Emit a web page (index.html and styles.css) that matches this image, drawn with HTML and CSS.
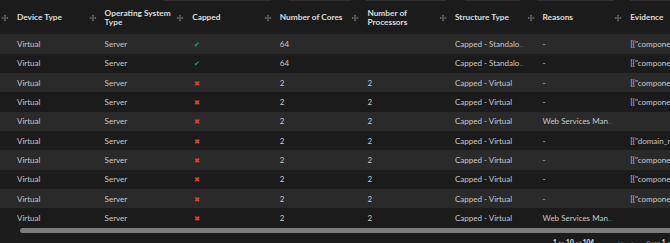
FILE: index.html
```html
<!DOCTYPE html>
<html>
  <head>
    <title>Capping Report</title>
    <meta name="viewport" content="width=device-width, initial-scale=1.0" />
    <link rel="stylesheet" href="styles.css">
  </head>
  <body>
    <div class="grid">
      <div class="filters">
        <span class="f f1"></span>
        <span class="f f2"></span>
        <span class="f f3"></span>
        <span class="f f4"></span>
        <span class="f f5"></span>
        <span class="f f6"></span>
      </div>

      <div class="viewport">
        <div class="row head">
          <div class="cell"><svg class="grip" viewBox="0 0 8 8"><path d="M4 0.5L5.3 2H4.5V3.5H6V2.7L7.5 4L6 5.3V4.5H4.5V6H5.3L4 7.5L2.7 6H3.5V4.5H2V5.3L0.5 4L2 2.7V3.5H3.5V2H2.7Z"/></svg><span>Device Type</span></div>
          <div class="cell"><svg class="grip" viewBox="0 0 8 8"><path d="M4 0.5L5.3 2H4.5V3.5H6V2.7L7.5 4L6 5.3V4.5H4.5V6H5.3L4 7.5L2.7 6H3.5V4.5H2V5.3L0.5 4L2 2.7V3.5H3.5V2H2.7Z"/></svg><span>Operating System<br>Type</span></div>
          <div class="cell"><svg class="grip" viewBox="0 0 8 8"><path d="M4 0.5L5.3 2H4.5V3.5H6V2.7L7.5 4L6 5.3V4.5H4.5V6H5.3L4 7.5L2.7 6H3.5V4.5H2V5.3L0.5 4L2 2.7V3.5H3.5V2H2.7Z"/></svg><span>Capped</span></div>
          <div class="cell"><svg class="grip" viewBox="0 0 8 8"><path d="M4 0.5L5.3 2H4.5V3.5H6V2.7L7.5 4L6 5.3V4.5H4.5V6H5.3L4 7.5L2.7 6H3.5V4.5H2V5.3L0.5 4L2 2.7V3.5H3.5V2H2.7Z"/></svg><span>Number of Cores</span></div>
          <div class="cell"><svg class="grip" viewBox="0 0 8 8"><path d="M4 0.5L5.3 2H4.5V3.5H6V2.7L7.5 4L6 5.3V4.5H4.5V6H5.3L4 7.5L2.7 6H3.5V4.5H2V5.3L0.5 4L2 2.7V3.5H3.5V2H2.7Z"/></svg><span>Number of<br>Processors</span></div>
          <div class="cell"><svg class="grip" viewBox="0 0 8 8"><path d="M4 0.5L5.3 2H4.5V3.5H6V2.7L7.5 4L6 5.3V4.5H4.5V6H5.3L4 7.5L2.7 6H3.5V4.5H2V5.3L0.5 4L2 2.7V3.5H3.5V2H2.7Z"/></svg><span>Structure Type</span></div>
          <div class="cell"><svg class="grip" viewBox="0 0 8 8"><path d="M4 0.5L5.3 2H4.5V3.5H6V2.7L7.5 4L6 5.3V4.5H4.5V6H5.3L4 7.5L2.7 6H3.5V4.5H2V5.3L0.5 4L2 2.7V3.5H3.5V2H2.7Z"/></svg><span>Reasons</span></div>
          <div class="cell"><svg class="grip" viewBox="0 0 8 8"><path d="M4 0.5L5.3 2H4.5V3.5H6V2.7L7.5 4L6 5.3V4.5H4.5V6H5.3L4 7.5L2.7 6H3.5V4.5H2V5.3L0.5 4L2 2.7V3.5H3.5V2H2.7Z"/></svg><span>Evidence</span></div>
          <div class="cell"><span>Last Seen</span></div>
        </div>

        <div class="row odd">
          <div class="cell">Virtual</div><div class="cell">Server</div>
          <div class="cell"><span class="yes">&#10004;</span></div>
          <div class="cell">64</div><div class="cell"></div>
          <div class="cell">Capped - Standalo<span class="more">...</span></div>
          <div class="cell">-</div><div class="cell">[{"component"</div><div class="cell"></div>
        </div>
        <div class="row">
          <div class="cell">Virtual</div><div class="cell">Server</div>
          <div class="cell"><span class="yes">&#10004;</span></div>
          <div class="cell">64</div><div class="cell"></div>
          <div class="cell">Capped - Standalo<span class="more">...</span></div>
          <div class="cell">-</div><div class="cell">[{"component"</div><div class="cell"></div>
        </div>
        <div class="row odd">
          <div class="cell">Virtual</div><div class="cell">Server</div>
          <div class="cell"><span class="no">&#10006;</span></div>
          <div class="cell">2</div><div class="cell">2</div>
          <div class="cell">Capped - Virtual</div>
          <div class="cell">-</div><div class="cell">[{"component"</div><div class="cell"></div>
        </div>
        <div class="row">
          <div class="cell">Virtual</div><div class="cell">Server</div>
          <div class="cell"><span class="no">&#10006;</span></div>
          <div class="cell">2</div><div class="cell">2</div>
          <div class="cell">Capped - Virtual</div>
          <div class="cell">-</div><div class="cell">[{"component"</div><div class="cell"></div>
        </div>
        <div class="row odd">
          <div class="cell">Virtual</div><div class="cell">Server</div>
          <div class="cell"><span class="no">&#10006;</span></div>
          <div class="cell">2</div><div class="cell">2</div>
          <div class="cell">Capped - Virtual</div>
          <div class="cell">Web Services Man<span class="more">...</span></div><div class="cell"></div><div class="cell"></div>
        </div>
        <div class="row">
          <div class="cell">Virtual</div><div class="cell">Server</div>
          <div class="cell"><span class="no">&#10006;</span></div>
          <div class="cell">2</div><div class="cell">2</div>
          <div class="cell">Capped - Virtual</div>
          <div class="cell">-</div><div class="cell">[{"domain_name"</div><div class="cell"></div>
        </div>
        <div class="row odd">
          <div class="cell">Virtual</div><div class="cell">Server</div>
          <div class="cell"><span class="no">&#10006;</span></div>
          <div class="cell">2</div><div class="cell">2</div>
          <div class="cell">Capped - Virtual</div>
          <div class="cell">-</div><div class="cell">[{"component"</div><div class="cell"></div>
        </div>
        <div class="row">
          <div class="cell">Virtual</div><div class="cell">Server</div>
          <div class="cell"><span class="no">&#10006;</span></div>
          <div class="cell">2</div><div class="cell">2</div>
          <div class="cell">Capped - Virtual</div>
          <div class="cell">-</div><div class="cell">[{"component"</div><div class="cell"></div>
        </div>
        <div class="row odd">
          <div class="cell">Virtual</div><div class="cell">Server</div>
          <div class="cell"><span class="no">&#10006;</span></div>
          <div class="cell">2</div><div class="cell">2</div>
          <div class="cell">Capped - Virtual</div>
          <div class="cell">-</div><div class="cell">[{"component"</div><div class="cell"></div>
        </div>
        <div class="row">
          <div class="cell">Virtual</div><div class="cell">Server</div>
          <div class="cell"><span class="no">&#10006;</span></div>
          <div class="cell">2</div><div class="cell">2</div>
          <div class="cell">Capped - Virtual</div>
          <div class="cell">Web Services Man<span class="more">...</span></div><div class="cell"></div><div class="cell"></div>
        </div>
      </div>

      <!-- horizontal scrollbar -->
      <div class="scrollbar"><div class="thumb"></div></div>

      <div class="pager">
        <span class="count"><b>1</b> to <b>10</b> of <b>104</b></span>
        <span class="nav">|&lt;</span>
        <span class="nav">&lt;</span>
        <span class="page">Page <b>1</b> of <b>11</b></span>
      </div>
    </div>
  </body>
</html>
```

FILE: styles.css
```css
body {
  margin: 0;
  background-color: #1b1b1b;
  font-family: "Lato", "Liberation Sans", sans-serif;
  color: #c9c9c9;
  overflow: hidden;
}

.grid {
  width: 670px;
  height: 243px;
  overflow: hidden;
}

.filters {
  display: flex;
  height: 1px;
}

.f {
  height: 1px;
  background-color: #303030;
}

.f1 { margin-left: 164px; width: 108px; }
.f2 { margin-left: 18px; width: 62px; }
.f3 { margin-left: 15px; width: 80px; }
.f4 { margin-left: 19px; width: 55px; }
.f5 { margin-left: 17px; width: 78px; }
.f6 { margin-left: 16px; width: 40px; }

.viewport {
  width: 670px;
  overflow: hidden;
}

.row {
  display: grid;
  grid-template-columns: repeat(9, 87.6px);
  height: 19.35px;
  align-items: center;
  font-size: 8px;
  background-color: #1b1b1b;
}

.row.odd {
  background-color: #2a2a2a;
}

.row .cell {
  padding-left: 17px;
  white-space: nowrap;
  overflow: hidden;
}

.row.head {
  height: 33.3px;
  font-size: 8.3px;
  font-weight: 700;
  color: #dedede;
}

.row.head .cell {
  display: flex;
  align-items: center;
  padding-left: 1px;
  line-height: 9.5px;
}

.grip {
  width: 8px;
  height: 8px;
  fill: #6e6e6e;
  margin-right: 8px;
  flex-shrink: 0;
}

.row.head .cell span {
  padding-top: 1px;
}

.yes,
.no {
  display: inline-block;
  margin-left: 2px;
  font-size: 7px;
}

.yes {
  color: #17a58c;
}

.no {
  color: #e0453a;
}

.more {
  color: #1f9d8a;
  font-size: 6px;
}

.scrollbar {
  height: 5px;
  padding-left: 20px;
}

.thumb {
  height: 5px;
  background-color: #7b7b7b;
  border-radius: 3px 0 0 3px;
}

.pager {
  display: flex;
  padding: 6px 0 0 553px;
  font-size: 6.5px;
  color: #8a8a8a;
  white-space: nowrap;
}

.pager b {
  color: #e6e6e6;
}

.pager .count {
  margin-right: 24px;
}

.pager .nav {
  margin-right: 7px;
  color: #6a6a6a;
}

.pager .page {
  margin-left: 5px;
}
```
